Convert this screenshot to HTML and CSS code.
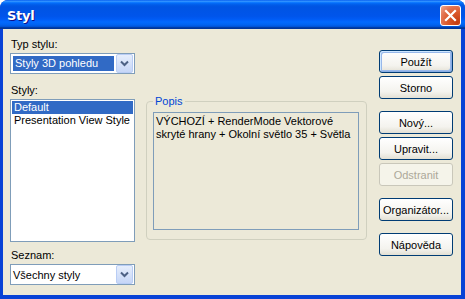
FILE: index.html
```html
<!DOCTYPE html>
<html lang="cs">
<head>
    <meta charset="UTF-8">
    <title>Styl</title>
    <link rel="stylesheet" href="styles.css">
</head>
<body>

    <div class="window">
        <div class="titlebar">
            <span class="title">Styl</span>
            <button type="button" class="close-btn" aria-label="Zavřít">
                <svg width="13" height="13" viewBox="0 0 13 13">
                    <path d="M2 2 L11 11 M11 2 L2 11" stroke="#fff" stroke-width="2.2" stroke-linecap="square"/>
                </svg>
            </button>
        </div>

        <div class="client">
            <div class="left-col">
                <label class="field-label">Typ stylu:</label>
                <div class="combo">
                    <span class="combo-text"><span class="combo-sel">Styly 3D pohledu</span></span>
                    <span class="combo-arrow">
                        <svg width="9" height="7" viewBox="0 0 9 7"><path d="M1 1.5 L4.5 5 L8 1.5" fill="none" stroke="#4d6185" stroke-width="2"/></svg>
                    </span>
                </div>

                <label class="field-label styly-label">Styly:</label>
                <div class="listbox">
                    <div class="list-item selected">Default</div>
                    <div class="list-item">Presentation View Style</div>
                </div>

                <label class="field-label seznam-label">Seznam:</label>
                <div class="combo">
                    <span class="combo-text">Všechny styly</span>
                    <span class="combo-arrow">
                        <svg width="9" height="7" viewBox="0 0 9 7"><path d="M1 1.5 L4.5 5 L8 1.5" fill="none" stroke="#4d6185" stroke-width="2"/></svg>
                    </span>
                </div>
            </div>

            <fieldset class="popis">
                <legend>Popis</legend>
                <div class="popis-text">VÝCHOZÍ + RenderMode Vektorové skryté hrany + Okolní světlo 35 + Světla</div>
            </fieldset>

            <div class="buttons">
                <button type="button" class="btn default-btn">Použít</button>
                <button type="button" class="btn">Storno</button>
                <button type="button" class="btn group-start">Nový...</button>
                <button type="button" class="btn">Upravit...</button>
                <button type="button" class="btn" disabled>Odstranit</button>
                <button type="button" class="btn group-start">Organizátor...</button>
                <button type="button" class="btn group-start">Nápověda</button>
            </div>
        </div>
    </div>

</body>
</html>
```

FILE: styles.css
```css
body {
    margin: 0;
    font-family: "Liberation Sans", Arial, sans-serif;
    font-size: 11px;
    background: #fff;
}

.window {
    width: 465px;
    height: 299px;
    box-sizing: border-box;
    background: #0842d6;
    border-radius: 8px 8px 0 0;
    display: flex;
    flex-direction: column;
    overflow: hidden;
}

/* barra de titulo */
.titlebar {
    height: 29px;
    flex: none;
    display: flex;
    align-items: center;
    justify-content: space-between;
    padding: 0 4px 0 7px;
    background: linear-gradient(to bottom, #0058ee 0%, #3593ff 4%, #288eff 6%, #127dff 8%, #036ffc 10%, #0262ee 14%, #0057e5 20%, #0054e3 24%, #0055eb 56%, #005bf5 66%, #026afe 76%, #0062ef 86%, #0052d6 92%, #0040ab 94%, #003092 100%);
}

.title {
    color: #fff;
    font-family: "DejaVu Sans", sans-serif;
    font-weight: bold;
    font-size: 13px;
    letter-spacing: -0.3px;
    text-shadow: 1px 1px #0f1089;
    margin-top: 1px;
}

.close-btn {
    width: 21px;
    height: 21px;
    padding: 0;
    border: 1px solid #fff;
    border-radius: 3px;
    background: radial-gradient(circle at 85% 85%, #c43c10 0%, #dc5a2c 45%, #e27452 70%, #f0a990 100%);
    display: flex;
    align-items: center;
    justify-content: center;
    margin-top: 1px;
}

/* area de cliente */
.client {
    flex: 1;
    margin: 0 4px 4px 3px;
    background: #ece9d8;
    display: flex;
    align-items: flex-start;
    padding: 9px 0 0 7px;
}

.left-col {
    width: 125px;
    display: flex;
    flex-direction: column;
}

.field-label {
    display: block;
    height: 13px;
    line-height: 13px;
    padding-left: 1px;
    margin-bottom: 2px;
}

.styly-label {
    margin-top: 10px;
}

.seznam-label {
    margin-top: 7px;
}

.combo {
    height: 21px;
    box-sizing: border-box;
    border: 1px solid #7f9db9;
    background: #fff;
    display: flex;
    align-items: center;
    padding: 0 1px 0 2px;
}

.combo-text {
    flex: 1;
    display: flex;
}

.combo-sel {
    flex: 1;
    background: #316ac5;
    color: #fff;
    height: 15px;
    line-height: 15px;
    padding-left: 2px;
    margin-right: 2px;
}

.combo .combo-text {
    padding-left: 0;
}

.combo-arrow {
    width: 15px;
    height: 17px;
    border: 1px solid #b9cdf5;
    border-radius: 2px;
    background: linear-gradient(to bottom, #e6eefc, #c6d6f7);
    display: flex;
    align-items: center;
    justify-content: center;
}

.listbox {
    height: 143px;
    box-sizing: border-box;
    border: 1px solid #7f9db9;
    background: #fff;
    padding: 1px;
}

.list-item {
    height: 13px;
    line-height: 13px;
    padding-left: 2px;
}

.list-item.selected {
    background: #316ac5;
    color: #fff;
}

/* grupo Popis */
.popis {
    margin: 57px 0 0 11px;
    width: 221px;
    height: 145px;
    box-sizing: border-box;
    border: 1px solid #d0d0bf;
    border-radius: 4px;
    padding: 0 7px 7px 6px;
    min-width: 0;
}

.popis legend {
    color: #0046d5;
    padding: 0 2px;
    margin-left: 0;
    line-height: 13px;
}

.popis-text {
    margin-top: 4px;
    height: 118px;
    box-sizing: border-box;
    border: 1px solid #7f9db9;
    padding: 2px 2px;
    line-height: 13px;
}

/* botones */
.buttons {
    margin: 12px 0 0 12px;
    width: 74px;
    display: flex;
    flex-direction: column;
    gap: 3px;
}

.btn {
    height: 23px;
    padding: 0;
    border: 1px solid #003c74;
    border-radius: 3px;
    background: linear-gradient(to bottom, #ffffff 0%, #f4f3ee 70%, #e3e0d4 100%);
    font-family: "Liberation Sans", Arial, sans-serif;
    font-size: 11px;
    color: #000;
}

.default-btn {
    box-shadow: inset 1px 1px #cee7ff, inset -1px -1px #89ade4, inset 2px 2px #98b8ea, inset -2px -2px #98b8ea;
}

.group-start {
    margin-top: 9px;
}

.btn[disabled] {
    border-color: #c9c7ba;
    background: #f5f4ea;
    color: #aca899;
}
```
